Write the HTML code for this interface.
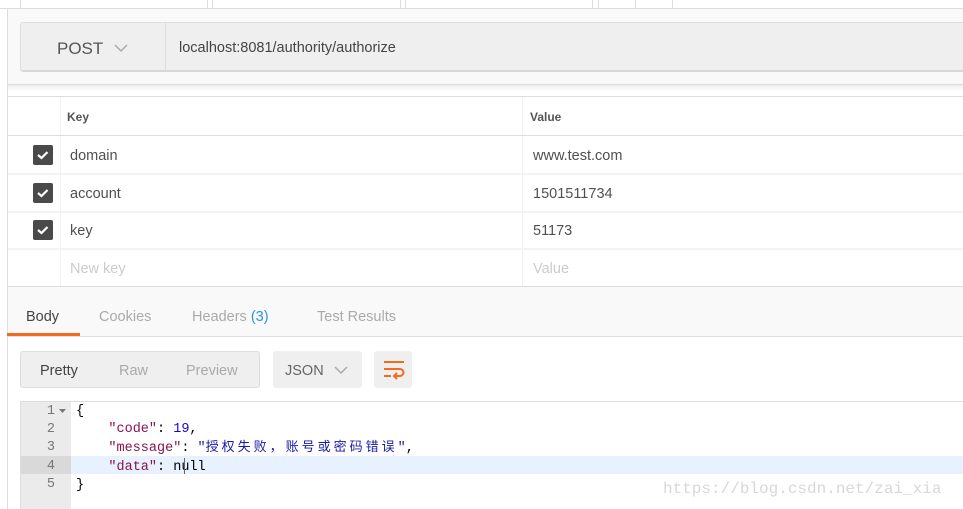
<!DOCTYPE html>
<html><head><meta charset="utf-8"><style>
*{margin:0;padding:0;box-sizing:border-box}
body{width:963px;height:509px;overflow:hidden;background:#fff;font-family:"Liberation Sans","Noto Sans CJK SC",sans-serif;position:relative;color:#505050}
.a{position:absolute}
.t{position:absolute;margin-top:2px}
.vl{position:absolute;top:0;height:9px;width:1px;background:#ddd}
.code{font-family:"Liberation Mono","Noto Sans CJK SC",monospace;font-size:13.5px}
</style></head><body>
<div class="a" style="left:7px;top:0;width:1px;height:509px;background:#ddd"></div>
<div class="a" style="left:0;top:0;width:963px;height:9px;background:#fff;border-bottom:1px solid #ddd"></div>
<div class="vl" style="left:20px"></div><div class="vl" style="left:207px"></div><div class="vl" style="left:212px"></div><div class="vl" style="left:400px"></div><div class="vl" style="left:405px"></div><div class="vl" style="left:592px"></div><div class="vl" style="left:598px"></div><div class="vl" style="left:635px"></div><div class="vl" style="left:672px"></div>
<div class="a" style="left:8px;top:9px;width:955px;height:76px;background:#f9f9f9;border-bottom:1px solid #ddd"></div>
<div class="a" style="left:8px;top:85px;width:955px;height:6px;background:linear-gradient(#eee,#fff)"></div>
<div class="a" style="left:20px;top:22px;width:950px;height:50px;background:#efefef;border:1px solid #ddd;border-bottom:2px solid #d8d8d8;border-radius:3px"></div>
<div class="a" style="left:165px;top:23px;width:1px;height:48px;background:#ddd"></div>
<div class="t" style="left:57px;top:37px;font-size:17px;color:#555">POST</div>
<svg class="a" style="left:114px;top:44px" width="14" height="9"><path d="M1 1L7 7L13 1" stroke="#aaa" stroke-width="1.5" fill="none"/></svg>
<div class="t" style="left:179px;top:38px;font-size:14.5px;color:#444">localhost:8081/authority/authorize</div>
<div class="a" style="left:8px;top:96px;width:955px;height:1px;background:#ddd"></div>
<div class="a" style="left:60px;top:97px;width:1px;height:190px;background:#f3f3f3"></div>
<div class="a" style="left:522px;top:97px;width:1px;height:190px;background:#f0f0f0"></div>
<div class="t" style="left:67px;top:108px;font-size:12px;font-weight:bold;color:#555">Key</div>
<div class="t" style="left:530px;top:108px;font-size:12px;font-weight:bold;color:#555">Value</div>
<div class="a" style="left:8px;top:135px;width:955px;height:1px;background:#ddd"></div>
<div class="a" style="left:8px;top:173px;width:955px;height:2px;background:#f3f3f3"></div>
<div class="a" style="left:8px;top:211px;width:955px;height:2px;background:#f3f3f3"></div>
<div class="a" style="left:8px;top:248px;width:955px;height:2px;background:#f3f3f3"></div>
<div class="a" style="left:8px;top:286px;width:955px;height:1px;background:#ddd"></div>
<svg class="a" style="left:33px;top:145px" width="20" height="20"><rect width="20" height="20" rx="2" fill="#4a4a4a"/><path d="M5 10L8.5 13L14.5 7" stroke="#fff" stroke-width="2.2" fill="none"/></svg>
<svg class="a" style="left:33px;top:183px" width="20" height="20"><rect width="20" height="20" rx="2" fill="#4a4a4a"/><path d="M5 10L8.5 13L14.5 7" stroke="#fff" stroke-width="2.2" fill="none"/></svg>
<svg class="a" style="left:33px;top:220px" width="20" height="20"><rect width="20" height="20" rx="2" fill="#4a4a4a"/><path d="M5 10L8.5 13L14.5 7" stroke="#fff" stroke-width="2.2" fill="none"/></svg>
<div class="t" style="left:70px;top:146px;font-size:14.5px">domain</div>
<div class="t" style="left:70px;top:184px;font-size:14.5px">account</div>
<div class="t" style="left:70px;top:221px;font-size:14.5px">key</div>
<div class="t" style="left:70px;top:259px;font-size:14.5px;color:#ccc">New key</div>
<div class="t" style="left:533px;top:146px;font-size:14.5px">www.test.com</div>
<div class="t" style="left:533px;top:184px;font-size:14.5px">1501511734</div>
<div class="t" style="left:533px;top:221px;font-size:14.5px">51173</div>
<div class="t" style="left:533px;top:259px;font-size:14.5px;color:#ccc">Value</div>
<div class="a" style="left:8px;top:287px;width:955px;height:50px;background:#f9f9f9;border-bottom:1px solid #ddd"></div>
<div class="t" style="left:26px;top:307px;font-size:14.5px;color:#444">Body</div>
<div class="t" style="left:99px;top:307px;font-size:14.5px;color:#aaa">Cookies</div>
<div class="t" style="left:192px;top:307px;font-size:14.5px;color:#aaa">Headers <span style="color:#2f94e0">(3)</span></div>
<div class="t" style="left:317px;top:307px;font-size:14.5px;color:#aaa">Test Results</div>
<div class="a" style="left:7px;top:333px;width:73px;height:3px;background:#f26b21"></div>
<div class="a" style="left:20px;top:351px;width:240px;height:37px;background:#efefef;border:1px solid #ddd;border-radius:3px"></div>
<div class="t" style="left:40px;top:361px;font-size:14.5px;color:#444">Pretty</div>
<div class="t" style="left:119px;top:361px;font-size:14.5px;color:#aaa">Raw</div>
<div class="t" style="left:186px;top:361px;font-size:14.5px;color:#aaa">Preview</div>
<div class="a" style="left:273px;top:351px;width:89px;height:37px;background:#efefef;border-radius:3px"></div>
<div class="t" style="left:285px;top:361px;font-size:14.5px;color:#666">JSON</div>
<svg class="a" style="left:334px;top:366px" width="14" height="9"><path d="M1 1L7 7L13 1" stroke="#aaa" stroke-width="1.5" fill="none"/></svg>
<div class="a" style="left:374px;top:351px;width:38px;height:37px;background:#efefef;border-radius:3px"></div>
<svg class="a" style="left:382px;top:359px" width="24" height="22"><path d="M2 3H22M2 10H18a3.5 3.5 0 0 1 0 7H13M2 17H9" stroke="#f26b21" stroke-width="2" fill="none"/><path d="M15 14L12 17L15 20" stroke="#f26b21" stroke-width="2" fill="none"/></svg>
<div class="a" style="left:20px;top:401px;width:943px;height:108px;border-top:1px solid #ddd;border-left:1px solid #ddd"></div>
<div class="a" style="left:21px;top:402px;width:50px;height:107px;background:#ebebeb"></div>
<div class="a" style="left:21px;top:456px;width:50px;height:18px;background:#d9d9d9"></div>
<div class="a" style="left:71px;top:456px;width:892px;height:18px;background:#e8f2fe"></div>
<div class="a code" style="left:40px;top:403px;line-height:18.2px;color:#777;text-align:right;width:15px">1<br>2<br>3<br>4<br>5</div>
<svg class="a" style="left:59px;top:409px" width="7" height="5"><path d="M0 0H7L3.5 4Z" fill="#777"/></svg>
<div class="a code" style="left:76px;top:403px;line-height:18.2px;color:#000;white-space:pre">{
    <span style="color:#881350">"code"</span>: <span style="color:#1c00cf">19</span>,
    <span style="color:#881350">"message"</span>: <span style="color:#1a1aa6">"<span style="letter-spacing:3px;font-size:13px">授权失败，账号或密码错误</span>"</span>,
    <span style="color:#881350">"data"</span>: null
}</div>
<div class="a" style="left:184px;top:458px;width:1px;height:16px;background:#666"></div>
<div class="a" style="left:663px;top:480px;font-family:'Liberation Mono',monospace;font-size:16px;color:#d8d8d8">https://blog.csdn.net/zai_xia</div>
</body></html>
